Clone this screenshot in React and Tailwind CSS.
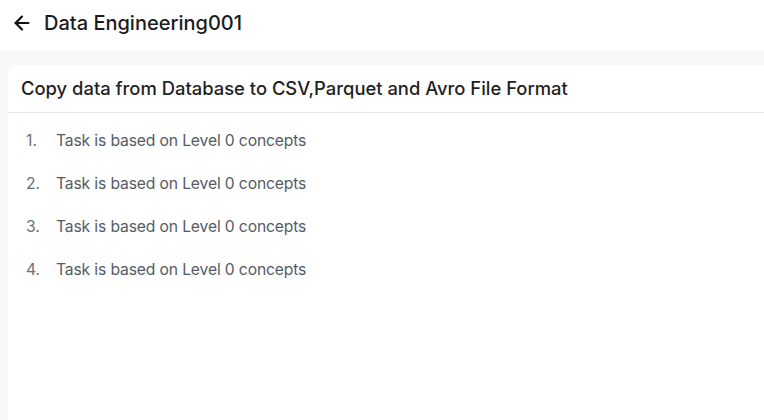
import React from 'react';
import { ArrowLeft } from 'lucide-react';

const tasks = [
    'Task is based on Level 0 concepts',
    'Task is based on Level 0 concepts',
    'Task is based on Level 0 concepts',
    'Task is based on Level 0 concepts',
];

const App = () => {
    return (
        <div className="h-[420px] w-[764px] overflow-hidden bg-[#f8f8f8] font-['Inter',sans-serif]">
            {/* Header */}
            <div className="flex h-[50px] items-center gap-[11px] bg-white pb-1 pl-[11px]">
                <ArrowLeft className="h-[22px] w-[22px] text-[#111]" strokeWidth={2.4} />
                <h1 className="text-[20px] font-medium text-[#1c1c1c]">Data Engineering001</h1>
            </div>

            {/* Task card */}
            <div className="ml-2 mt-[15px] h-[400px] rounded-tl-lg bg-white">
                <div className="flex h-[48px] items-center border-b border-[#e6e6e6] px-[13px]">
                    <h2 className="text-[18.4px] font-medium text-[#1f1f1f]">
                        Copy data from Database to CSV,Parquet and Avro File Format
                    </h2>
                </div>
                <ol className="flex flex-col gap-[19px] pl-[18px] pt-[16px]">
                    {tasks.map((task, i) => (
                        <li key={i} className="flex h-6 items-center text-[15.7px] text-[#555b66]">
                            <span className="w-[30px] text-[#6b6f76]">{i + 1}.</span>
                            <span className="tracking-[-0.15px]">{task}</span>
                        </li>
                    ))}
                </ol>
            </div>
        </div>
    );
};

export default App;
